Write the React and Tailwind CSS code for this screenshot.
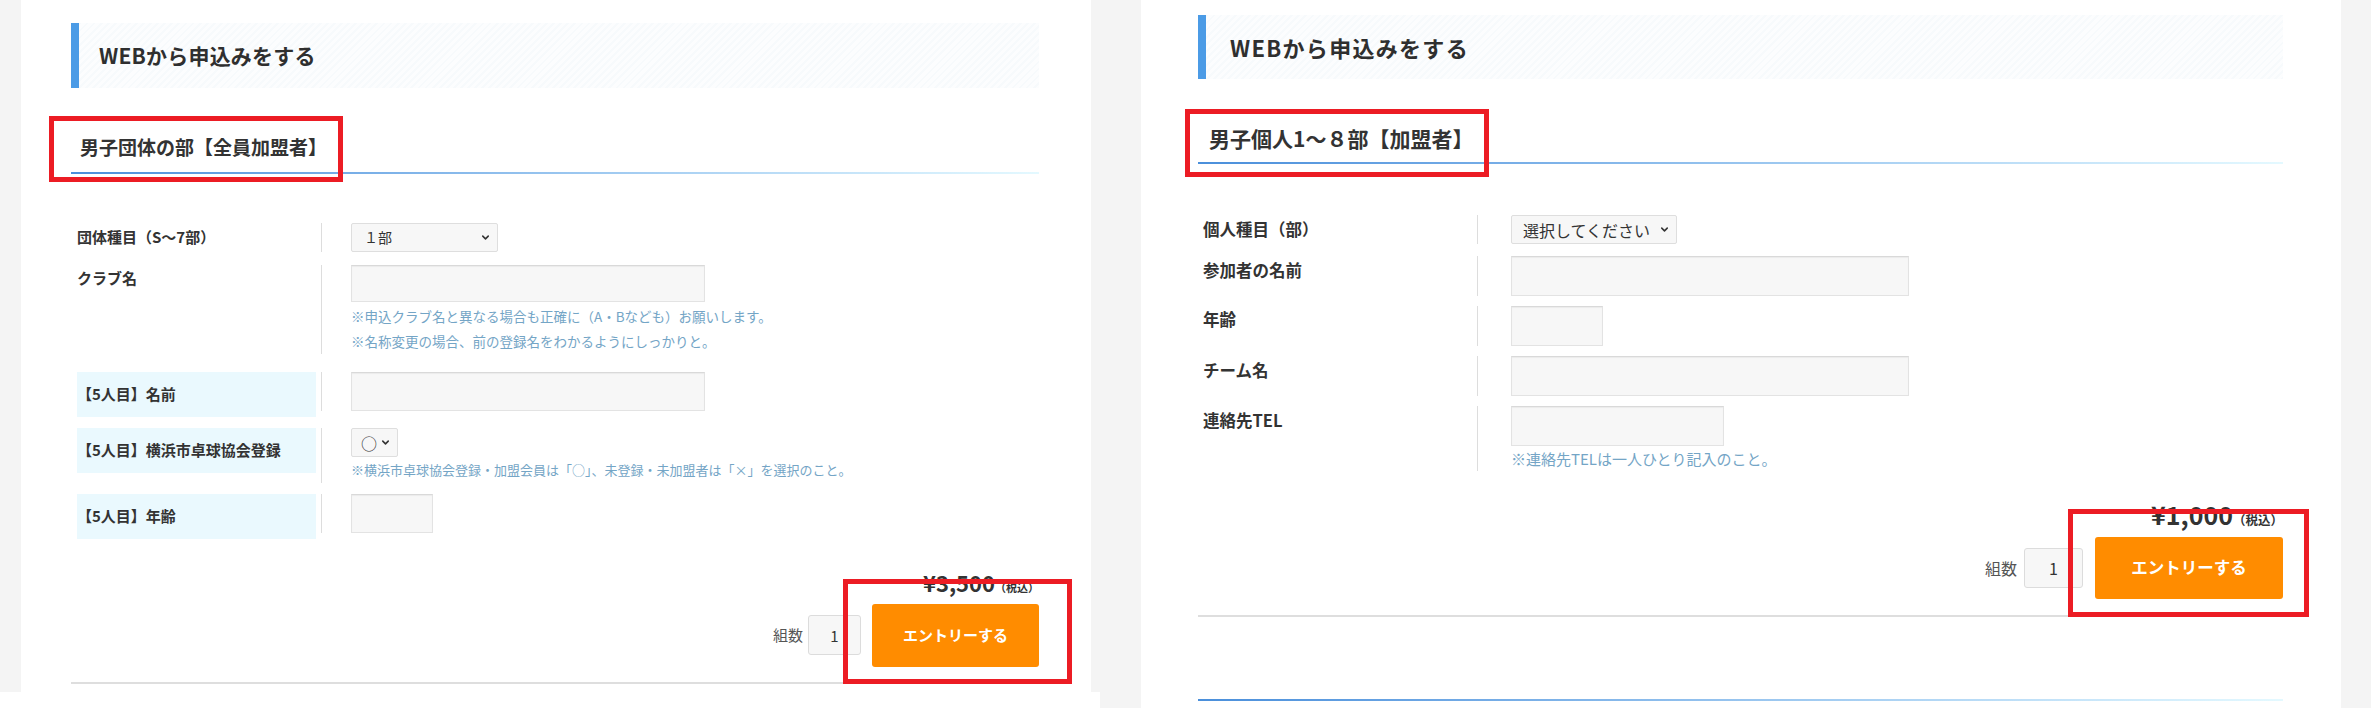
import React from 'react';
import { ChevronDown } from 'lucide-react';

const stripes =
  'bg-[image:repeating-linear-gradient(135deg,#f7fafc_0px,#f7fafc_2px,#fcfdfe_2px,#fcfdfe_5px)]';

function SelectBox({ text, className, textClass }) {
  return (
    <div
      className={`flex items-center justify-between rounded-[2px] border border-[#dedede] bg-[#f7f7f7] text-[#333] ${className}`}
    >
      <span className={textClass}>{text}</span>
      <ChevronDown size={11} strokeWidth={3.4} className="text-[#333]" />
    </div>
  );
}

function TextBox({ className }) {
  return (
    <input
      readOnly
      className={`block border border-[#e3e3e3] border-t-[#d9d9d9] bg-[#f7f7f7] shadow-[inset_0_1px_1px_rgba(0,0,0,0.05)] outline-none ${className}`}
    />
  );
}

function LeftRow({ label, shade, labelH, className, children }) {
  return (
    <div className={`flex items-start ${className}`}>
      <div className="w-[244px] shrink-0">
        <div
          className={`w-[239px] flex items-center text-[15px] font-bold text-[#333] ${labelH} ${
            shade ? 'bg-[#eaf9fe]' : ''
          }`}
        >
          {label}
        </div>
      </div>
      <div className="border-l border-[#dddddd] pl-[29px]">{children}</div>
    </div>
  );
}

function RightRow({ label, labelH, className, children }) {
  return (
    <div className={`flex items-start ${className}`}>
      <div className={`w-[274px] shrink-0 flex items-center text-[16.5px] font-bold text-[#333] ${labelH}`}>
        {label}
      </div>
      <div className="border-l border-[#dddddd] pl-[33px]">{children}</div>
    </div>
  );
}

function RedBox({ className }) {
  return <div className={`absolute border-[5px] border-[#ec1c24] ${className}`} />;
}

function LeftPanel() {
  return (
    <div className="relative w-[1100px] h-[692px] shrink-0 bg-[#f4f4f4] pl-[21px] pr-[9px]">
      <div className="h-full bg-white pl-[50px] pr-[52px] pt-[23px]">
        <div className={`h-[65px] border-l-[8px] border-[#4b9be6] ${stripes} flex items-center pl-[20px]`}>
          <h2 className="text-[21px] font-bold tracking-[0.2px] text-[#2f2f2f]">WEBから申込みをする</h2>
        </div>

        <div className="mt-[47px]">
          <h3 className="pl-[9px] pb-[13px] text-[19px] leading-[24px] font-bold text-[#333]">
            男子団体の部【全員加盟者】
          </h3>
          <div className="h-[2px] bg-linear-to-r from-[#4a8fdb] to-[#e4f9ff]" />
        </div>

        <div className="mt-[49px] pl-[6px]">
          <LeftRow label="団体種目（S～7部）" labelH="h-[29px]">
            <SelectBox text="１部" className="w-[147px] h-[29px] pl-[12px] pr-[6px]" textClass="text-[14px]" />
          </LeftRow>

          <LeftRow label="クラブ名" labelH="h-[26px]" className="mt-[13px]">
            <TextBox className="w-[354px] h-[37px]" />
            <div className="mt-[2px] text-[13.5px] leading-[25px] text-[#74a5c6]">
              <p>※申込クラブ名と異なる場合も正確に（A・Bなども）お願いします。</p>
              <p>※名称変更の場合、前の登録名をわかるようにしっかりと。</p>
            </div>
          </LeftRow>

          <LeftRow label="【5人目】名前" shade labelH="h-[45px]" className="mt-[18px]">
            <TextBox className="w-[354px] h-[39px]" />
          </LeftRow>

          <LeftRow label="【5人目】横浜市卓球協会登録" shade labelH="h-[45px]" className="mt-[11px]">
            <SelectBox text="○" className="w-[47px] h-[29px] pl-[9px] pr-[6px]" textClass="text-[16px]" />
            <p className="text-[13px] leading-[26px] text-[#74a5c6]">
              ※横浜市卓球協会登録・加盟会員は「○」、未登録・未加盟者は「×」を選択のこと。
            </p>
          </LeftRow>

          <LeftRow label="【5人目】年齢" shade labelH="h-[45px]" className="mt-[11px]">
            <TextBox className="w-[82px] h-[39px]" />
          </LeftRow>
        </div>

        <div className="mt-[30px] flex justify-end items-baseline font-bold text-[#333]">
          <span className="text-[22px] leading-[26px]">¥3,500</span>
          <span className="text-[11px]">（税込）</span>
        </div>

        <div className="mt-[8px] flex justify-end items-center">
          <span className="text-[15px] text-[#555]">組数</span>
          <input
            readOnly
            value="1"
            className="ml-[5px] w-[53px] h-[40px] rounded-[3px] border border-[#dcdcdc] bg-[#f7f7f7] text-center text-[15px] text-[#333] outline-none"
          />
          <button className="ml-[11px] w-[167px] h-[63px] rounded-[3px] bg-[#ff8c00] text-white text-[15px] font-bold">
            エントリーする
          </button>
        </div>

        <div className="mt-[15px] h-[2px] bg-[#dedede]" />
      </div>

      <RedBox className="left-[49px] top-[116px] w-[294px] h-[66px]" />
      <RedBox className="left-[843px] top-[579px] w-[229px] h-[105px]" />
    </div>
  );
}

function RightPanel() {
  return (
    <div className="relative w-[1271px] h-[708px] shrink-0 bg-[#f4f4f4] pl-[41px] pr-[30px]">
      <div className="h-full bg-white pl-[57px] pr-[58px] pt-[15px]">
        <div className={`h-[64px] border-l-[8px] border-[#4b9be6] ${stripes} flex items-center pl-[24px]`}>
          <h2 className="text-[22px] font-bold tracking-[1.3px] text-[#2f2f2f]">WEBから申込みをする</h2>
        </div>

        <div className="mt-[46px]">
          <h3 className="pl-[11px] pb-[11px] text-[21px] leading-[26px] font-bold text-[#333]">
            男子個人1～８部【加盟者】
          </h3>
          <div className="h-[2px] bg-linear-to-r from-[#4a8fdb] to-[#e4f9ff]" />
        </div>

        <div className="mt-[51px] pl-[5px]">
          <RightRow label="個人種目（部）" labelH="h-[29px]">
            <SelectBox
              text="選択してください"
              className="w-[166px] h-[29px] pl-[11px] pr-[6px]"
              textClass="text-[16px]"
            />
          </RightRow>

          <RightRow label="参加者の名前" labelH="h-[28px]" className="mt-[12px]">
            <TextBox className="w-[398px] h-[40px]" />
          </RightRow>

          <RightRow label="年齢" labelH="h-[26px]" className="mt-[10px]">
            <TextBox className="w-[92px] h-[40px]" />
          </RightRow>

          <RightRow label="チーム名" labelH="h-[28px]" className="mt-[10px]">
            <TextBox className="w-[398px] h-[40px]" />
          </RightRow>

          <RightRow label="連絡先TEL" labelH="h-[28px]" className="mt-[10px]">
            <TextBox className="w-[213px] h-[40px]" />
            <p className="text-[15px] leading-[25px] text-[#74a5c6]">※連絡先TELは一人ひとり記入のこと。</p>
          </RightRow>
        </div>

        <div className="mt-[28px] flex justify-end items-baseline font-bold text-[#333]">
          <span className="text-[25px] leading-[30px]">¥1,000</span>
          <span className="text-[12.5px]">（税込）</span>
        </div>

        <div className="mt-[7px] flex justify-end items-center">
          <span className="text-[16px] text-[#555]">組数</span>
          <input
            readOnly
            value="1"
            className="ml-[7px] w-[59px] h-[40px] rounded-[3px] border border-[#dcdcdc] bg-[#f7f7f7] text-center text-[16px] text-[#333] outline-none"
          />
          <button className="ml-[12px] w-[188px] h-[62px] rounded-[3px] bg-[#ff8c00] text-white text-[16.5px] font-bold">
            エントリーする
          </button>
        </div>

        <div className="mt-[16px] h-[2px] bg-[#dedede]" />

        <div className="mt-[82px] h-[2px] bg-linear-to-r from-[#4a8fdb] to-[#e4f9ff]" />
      </div>

      <RedBox className="left-[85px] top-[109px] w-[304px] h-[68px]" />
      <RedBox className="left-[968px] top-[509px] w-[241px] h-[108px]" />
    </div>
  );
}

export default function App() {
  return (
    <div className="w-[2371px] h-[708px] overflow-hidden bg-white flex items-start font-['Noto_Sans_CJK_JP','Noto_Sans',sans-serif]">
      <LeftPanel />
      <RightPanel />
    </div>
  );
}
